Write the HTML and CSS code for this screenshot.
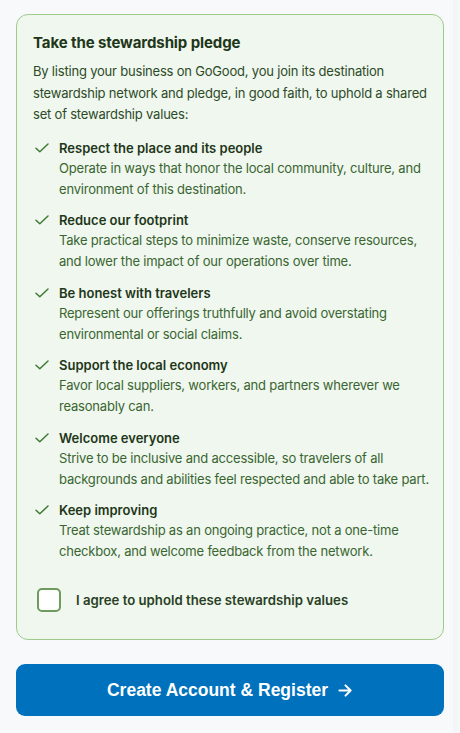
FILE: index.html
```html
<!DOCTYPE html>
<html lang="en">
<head>
<meta charset="utf-8">
<title>Stewardship pledge</title>
<link rel="stylesheet" href="styles.css">
</head>
<body>
<div class="page">
  <main class="main">
    <section class="card">
      <h2 class="title">Take the stewardship pledge</h2>
      <p class="intro">By listing your business on GoGood, you join its destination stewardship network and pledge, in good faith, to uphold a shared set of stewardship values:</p>
      <ul class="values">
        <li class="value">
          <svg class="check" viewBox="0 0 14 10" width="14" height="10"><path d="M1 5.2 L4.8 8.8 L13 1" fill="none" stroke="currentColor" stroke-width="1.5" stroke-linecap="round" stroke-linejoin="round"/></svg>
          <div class="value-text">
            <div class="value-title">Respect the place and its people</div>
            <div class="value-desc">Operate in ways that honor the local community, culture, and environment of this destination.</div>
          </div>
        </li>
        <li class="value">
          <svg class="check" viewBox="0 0 14 10" width="14" height="10"><path d="M1 5.2 L4.8 8.8 L13 1" fill="none" stroke="currentColor" stroke-width="1.5" stroke-linecap="round" stroke-linejoin="round"/></svg>
          <div class="value-text">
            <div class="value-title">Reduce our footprint</div>
            <div class="value-desc">Take practical steps to minimize waste, conserve resources, and lower the impact of our operations over time.</div>
          </div>
        </li>
        <li class="value">
          <svg class="check" viewBox="0 0 14 10" width="14" height="10"><path d="M1 5.2 L4.8 8.8 L13 1" fill="none" stroke="currentColor" stroke-width="1.5" stroke-linecap="round" stroke-linejoin="round"/></svg>
          <div class="value-text">
            <div class="value-title">Be honest with travelers</div>
            <div class="value-desc">Represent our offerings truthfully and avoid overstating environmental or social claims.</div>
          </div>
        </li>
        <li class="value">
          <svg class="check" viewBox="0 0 14 10" width="14" height="10"><path d="M1 5.2 L4.8 8.8 L13 1" fill="none" stroke="currentColor" stroke-width="1.5" stroke-linecap="round" stroke-linejoin="round"/></svg>
          <div class="value-text">
            <div class="value-title">Support the local economy</div>
            <div class="value-desc">Favor local suppliers, workers, and partners wherever we reasonably can.</div>
          </div>
        </li>
        <li class="value">
          <svg class="check" viewBox="0 0 14 10" width="14" height="10"><path d="M1 5.2 L4.8 8.8 L13 1" fill="none" stroke="currentColor" stroke-width="1.5" stroke-linecap="round" stroke-linejoin="round"/></svg>
          <div class="value-text">
            <div class="value-title">Welcome everyone</div>
            <div class="value-desc">Strive to be inclusive and accessible, so travelers of all backgrounds and abilities feel respected and able to take part.</div>
          </div>
        </li>
        <li class="value">
          <svg class="check" viewBox="0 0 14 10" width="14" height="10"><path d="M1 5.2 L4.8 8.8 L13 1" fill="none" stroke="currentColor" stroke-width="1.5" stroke-linecap="round" stroke-linejoin="round"/></svg>
          <div class="value-text">
            <div class="value-title">Keep improving</div>
            <div class="value-desc">Treat stewardship as an ongoing practice, not a one-time checkbox, and welcome feedback from the network.</div>
          </div>
        </li>
      </ul>
      <label class="agree">
        <span class="box"></span>
        <span class="agree-text">I agree to uphold these stewardship values</span>
      </label>
    </section>
    <button class="submit" type="button">
      <span>Create Account &amp; Register</span>
      <svg class="arrow" viewBox="0 0 16 14" width="15" height="13"><path d="M1.5 7 H13.5 M8 1.5 L13.5 7 L8 12.5" fill="none" stroke="currentColor" stroke-width="2.2" stroke-linecap="round" stroke-linejoin="round"/></svg>
    </button>
  </main>
  <div class="track"></div>
</div>
</body>
</html>
```

FILE: styles.css
```css
* { box-sizing: border-box; }
html, body { margin: 0; padding: 0; height: 100%; }
body {
  background: #f8f9fb;
  font-family: Inter, "Noto Sans", sans-serif;
  color: #2c4a27;
}
.page {
  display: flex;
  min-height: 100%;
}
.main {
  flex: 1;
  padding: 14px 9px 0 16px;
  display: flex;
  flex-direction: column;
}
.track {
  width: 7px;
  background: linear-gradient(to right, #f3f4f6, #f6f7f9);
}
.card {
  width: 428px;
  background: #eff7ee;
  border: 1px solid #9ecb8c;
  border-radius: 12px;
  padding: 18px 14px 27px 16px;
}
.title {
  margin: 0;
  font-size: 15px;
  line-height: 20px;
  font-weight: 650;
  color: #1e3619;
  letter-spacing: -0.1px;
}
.intro {
  margin: 8px 0 0 0;
  font-size: 13px;
  line-height: 21.5px;
  letter-spacing: -0.2px;
  color: #2d4a28;
}
.values {
  list-style: none;
  margin: 12px 0 0 0;
  padding: 0;
  display: flex;
  flex-direction: column;
  gap: 10.5px;
}
.value {
  display: flex;
  align-items: flex-start;
  gap: 10px;
}
.check {
  flex: none;
  color: #3f7a35;
  margin: 5px 0 0 2px;
}
.value-title {
  font-size: 13px;
  line-height: 20px;
  font-weight: 600;
  color: #1e3619;
}
.value-desc {
  font-size: 13px;
  line-height: 21px;
  letter-spacing: -0.2px;
  color: #3a6531;
}
.agree {
  display: flex;
  align-items: center;
  gap: 15px;
  margin: 26px 0 0 4px;
}
.box {
  width: 24px;
  height: 24px;
  border: 2px solid #6f9a5e;
  border-radius: 5px;
  background: #ffffff;
  flex: none;
}
.agree-text {
  font-size: 13.2px;
  font-weight: 600;
  color: #2a3f25;
}
.submit {
  margin-top: 24px;
  width: 428px;
  height: 52px;
  border: none;
  border-radius: 9px;
  background: #0072bd;
  color: #ffffff;
  font-family: "Liberation Sans", Arial, sans-serif;
  font-weight: 700;
  font-size: 17.5px;
  display: flex;
  align-items: center;
  justify-content: center;
  gap: 10px;
  padding: 0;
}
.arrow { flex: none; }
```
